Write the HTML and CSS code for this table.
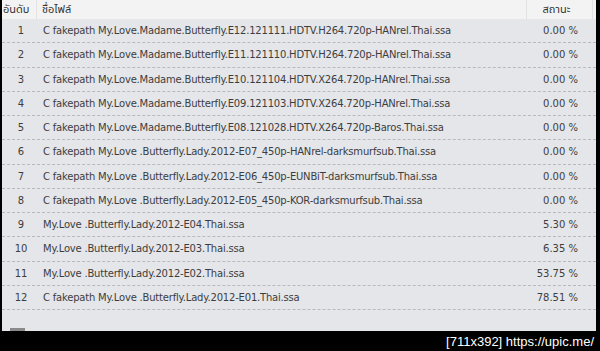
FILE: index.html
```html
<!DOCTYPE html>
<html>
<head>
<meta charset="utf-8">
<link rel="stylesheet" href="styles.css">
</head>
<body>
<div class="frame">
  <div class="head">
    <div class="hc c-num">อันดับ</div>
    <div class="hc c-name">ชื่อไฟล์</div>
    <div class="hc c-stat">สถานะ</div>
    <div class="hc c-rest"></div>
  </div>
  <div class="rows">
    <div class="row"><span class="num">1</span><span class="name">C fakepath My.Love.Madame.Butterfly.E12.121111.HDTV.H264.720p-HANrel.Thai.ssa</span><span class="stat">0.00 %</span></div>
    <div class="row"><span class="num">2</span><span class="name">C fakepath My.Love.Madame.Butterfly.E11.121110.HDTV.H264.720p-HANrel.Thai.ssa</span><span class="stat">0.00 %</span></div>
    <div class="row"><span class="num">3</span><span class="name">C fakepath My.Love.Madame.Butterfly.E10.121104.HDTV.X264.720p-HANrel.Thai.ssa</span><span class="stat">0.00 %</span></div>
    <div class="row"><span class="num">4</span><span class="name">C fakepath My.Love.Madame.Butterfly.E09.121103.HDTV.X264.720p-HANrel.Thai.ssa</span><span class="stat">0.00 %</span></div>
    <div class="row"><span class="num">5</span><span class="name">C fakepath My.Love.Madame.Butterfly.E08.121028.HDTV.X264.720p-Baros.Thai.ssa</span><span class="stat">0.00 %</span></div>
    <div class="row"><span class="num">6</span><span class="name">C fakepath My.Love .Butterfly.Lady.2012-E07_450p-HANrel-darksmurfsub.Thai.ssa</span><span class="stat">0.00 %</span></div>
    <div class="row"><span class="num">7</span><span class="name">C fakepath My.Love .Butterfly.Lady.2012-E06_450p-EUNBiT-darksmurfsub.Thai.ssa</span><span class="stat">0.00 %</span></div>
    <div class="row"><span class="num">8</span><span class="name">C fakepath My.Love .Butterfly.Lady.2012-E05_450p-KOR-darksmurfsub.Thai.ssa</span><span class="stat">0.00 %</span></div>
    <div class="row"><span class="num">9</span><span class="name">My.Love .Butterfly.Lady.2012-E04.Thai.ssa</span><span class="stat">5.30 %</span></div>
    <div class="row"><span class="num">10</span><span class="name">My.Love .Butterfly.Lady.2012-E03.Thai.ssa</span><span class="stat">6.35 %</span></div>
    <div class="row"><span class="num">11</span><span class="name">My.Love .Butterfly.Lady.2012-E02.Thai.ssa</span><span class="stat">53.75 %</span></div>
    <div class="row"><span class="num">12</span><span class="name">C fakepath My.Love .Butterfly.Lady.2012-E01.Thai.ssa</span><span class="stat">78.51 %</span></div>
  </div>
  <div class="thumb"></div>
</div>
<div class="footer">[711x392] https://upic.me/</div>
</body>
</html>
```

FILE: styles.css
```css
html, body {
  margin: 0;
  padding: 0;
  background: #000;
  width: 600px;
  height: 351px;
  overflow: hidden;
}
.frame {
  position: relative;
  margin-left: 2px;
  width: 594px;
  height: 331px;
  background: #e5e6ea;
  font-family: "DejaVu Sans", "Noto Sans Thai", "Noto Sans", sans-serif;
  font-size: 10px;
  color: #3d3d3d;
}
.head {
  display: grid;
  grid-template-columns: 35px 490px 66px 1fr;
  height: 19px;
  background: #f3f3f3;
}
.hc {
  display: flex;
  align-items: center;
  font-size: 11px;
  color: #333;
  border-right: 1px solid #e2e2e2;
  padding-left: 2px;
}
.hc.c-num { padding-left: 1px; }
.hc.c-name { padding-left: 5px; }
.hc.c-stat { justify-content: center; padding-left: 0; padding-right: 6px; }
.hc.c-rest { border-right: none; background: #f3f3f3; }
.row {
  display: grid;
  grid-template-columns: 35px 490px 51px;
  height: 23.25px;
  align-items: center;
  border-bottom: 1px dashed #b9b9b9;
}
.num { text-align: center; padding-left: 3px; }
.name { padding-left: 6px; white-space: nowrap; letter-spacing: -0.2px; }
.stat { text-align: right; white-space: nowrap; }
.thumb {
  position: absolute;
  left: 8px;
  bottom: 0;
  width: 15px;
  height: 3px;
  background: #8a8a8a;
}
.footer {
  height: 20px;
  display: flex;
  align-items: center;
  justify-content: flex-end;
  padding-right: 6px;
  color: #fff;
  font-family: "Liberation Sans", sans-serif;
  font-size: 13px;
}
```
